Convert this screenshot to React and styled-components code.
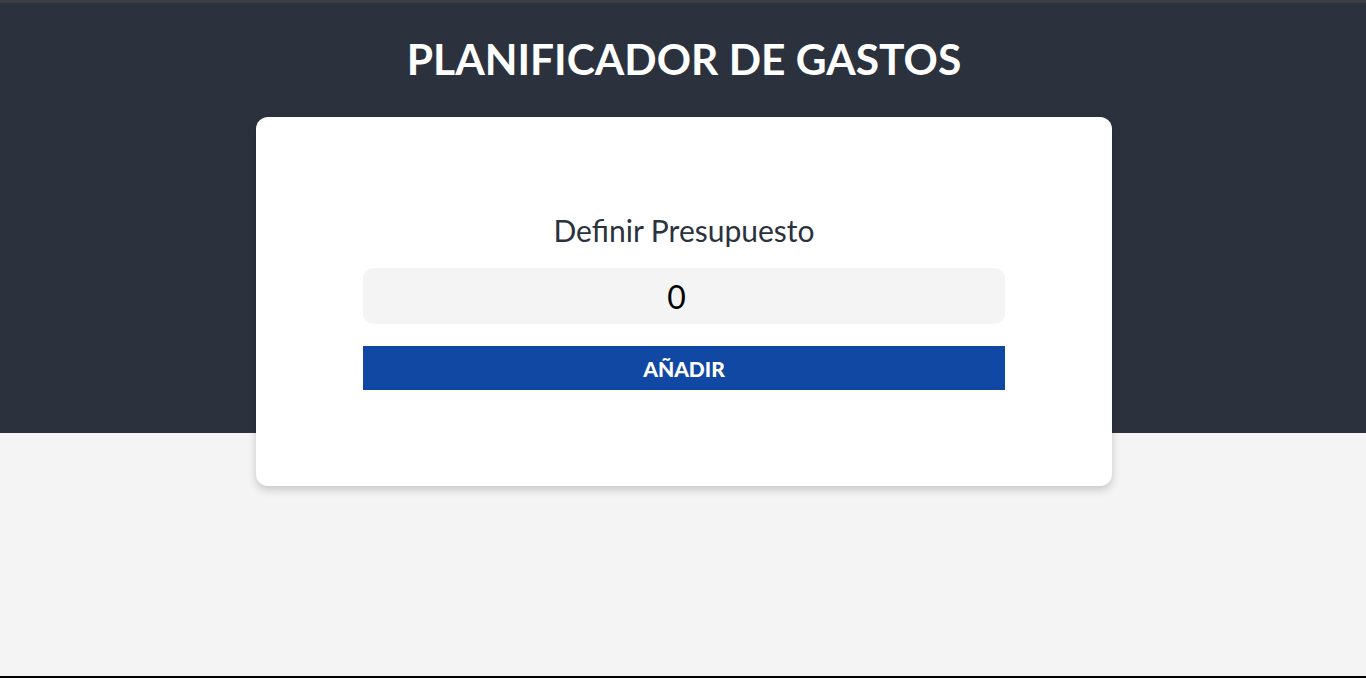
import React, { useState } from "react";
import styled, { createGlobalStyle } from "styled-components";

const GlobalStyle = createGlobalStyle`
  *, *::before, *::after { box-sizing: border-box; }
  html, body { margin: 0; padding: 0; background: #f4f4f4; }
  body { font-family: Lato, "Noto Sans", sans-serif; }
`;

const Page = styled.div`
  min-height: 100vh;
  display: flex;
  flex-direction: column;
  border-top: 3px solid #3d3e40;
  border-bottom: 2px solid #000;
  background: #f4f4f4;
`;

const Header = styled.header`
  background: #2b323e;
  padding-top: 31px;
  padding-left: 2px;
  display: flex;
  flex-direction: column;
  align-items: center;
`;

const Title = styled.h1`
  margin: 0;
  font-family: Lato, sans-serif;
  font-weight: 700;
  font-size: 42.5px;
  line-height: 50px;
  color: #ffffff;
  text-align: center;
`;

const Card = styled.div`
  width: 856px;
  margin-top: 33px;
  margin-bottom: -53px;
  background: #ffffff;
  border-radius: 12px;
  box-shadow: 0 4px 8px rgba(0, 0, 0, 0.18);
  padding: 95px 107px 96px;
`;

const Form = styled.form`
  display: flex;
  flex-direction: column;
`;

const Field = styled.div`
  display: flex;
  flex-direction: column;
  align-items: stretch;
  gap: 20px;
`;

const Label = styled.label`
  font-family: Lato, sans-serif;
  font-size: 30px;
  line-height: 36px;
  color: #2b323e;
  text-align: center;
`;

const Input = styled.input`
  height: 56px;
  border: none;
  outline: none;
  border-radius: 10px;
  background: #f4f4f4;
  font-family: Lato, sans-serif;
  font-size: 32px;
  color: #000;
  text-align: center;
  padding: 0 10px;
`;

const Button = styled.button`
  margin-top: 22px;
  height: 44px;
  border: none;
  background: #1048a4;
  color: #ffffff;
  font-family: Lato, sans-serif;
  font-weight: 900;
  font-size: 21px;
  text-transform: uppercase;
  cursor: pointer;
`;

export default function App() {
  const [value, setValue] = useState(0);
  return (
    <>
      <GlobalStyle />
      <Page>
        <Header>
          <Title>PLANIFICADOR DE GASTOS</Title>
          <Card>
            <Form onSubmit={(e) => e.preventDefault()}>
              <Field>
                <Label htmlFor="presupuesto">Definir Presupuesto</Label>
                <Input
                  id="presupuesto"
                  type="number"
                  value={value}
                  onChange={(e) => setValue(e.target.value)}
                />
              </Field>
              <Button type="submit">Añadir</Button>
            </Form>
          </Card>
        </Header>
      </Page>
    </>
  );
}
